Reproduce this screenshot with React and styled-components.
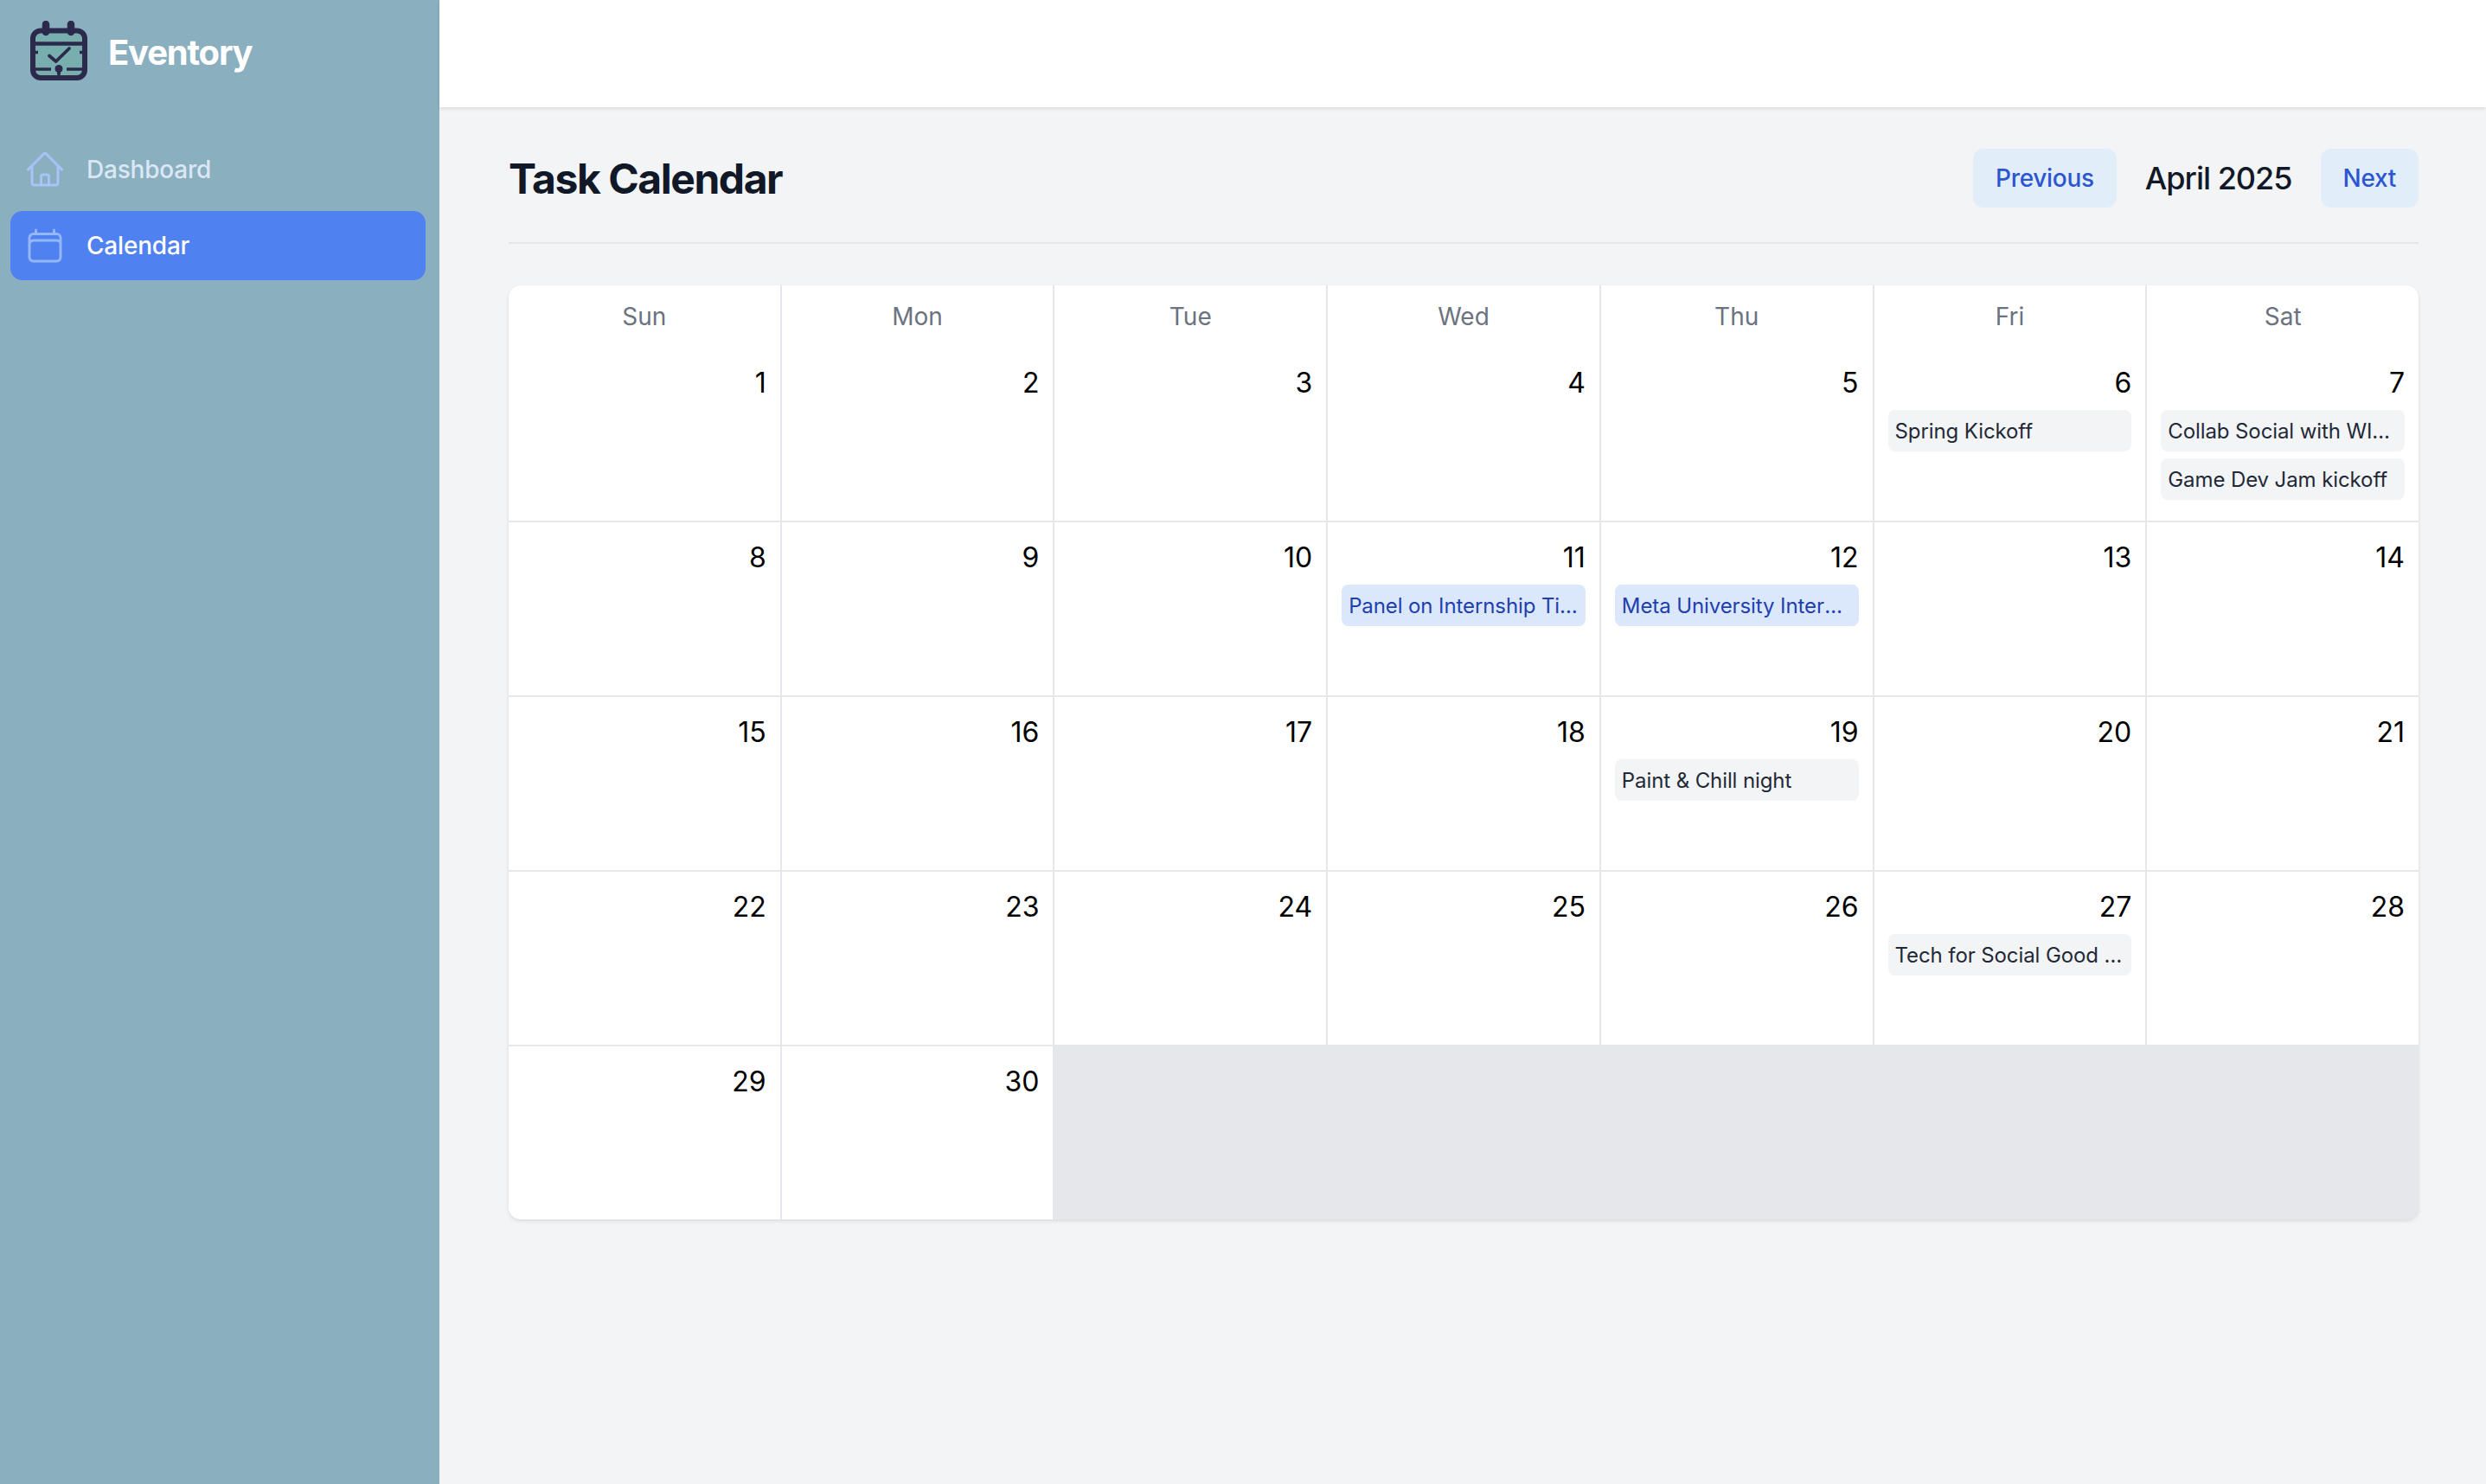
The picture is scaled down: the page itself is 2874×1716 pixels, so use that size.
import React from 'react';
import styled, { createGlobalStyle } from 'styled-components';
import { HiOutlineHome, HiOutlineCalendar } from 'react-icons/hi2';

const GlobalStyle = createGlobalStyle`
  * {
    box-sizing: border-box;
  }
  body {
    margin: 0;
    font-family: Inter, "Liberation Sans", sans-serif;
    background: #f3f4f6;
  }
`;

const Page = styled.div`
  display: flex;
  min-height: 100vh;
`;

const Sidebar = styled.aside`
  width: 508px;
  flex-shrink: 0;
  background: #8aafbf;
`;

const Brand = styled.div`
  height: 156px;
  display: flex;
  align-items: flex-start;
  gap: 24px;
  padding: 24px 0 0 35px;
`;

const BrandName = styled.span`
  font-size: 40px;
  line-height: 74px;
  font-weight: 700;
  letter-spacing: -1.2px;
  color: #fff;
`;

const Nav = styled.nav`
  display: flex;
  flex-direction: column;
  gap: 8px;
  padding: 0 16px 0 12px;
`;

const NavItem = styled.a`
  height: 80px;
  display: flex;
  align-items: center;
  gap: 24px;
  padding: 0 16px;
  border-radius: 14px;
  font-size: 28px;
  font-weight: 500;
  letter-spacing: -0.2px;
  color: ${(p) => (p.$active ? '#fff' : '#dbe7f5')};
  background: ${(p) => (p.$active ? '#4f81f1' : 'transparent')};

  svg {
    width: 48px;
    height: 48px;
    color: ${(p) => (p.$active ? '#93b7fa' : '#a7c4f6')};
  }
`;

const Main = styled.main`
  flex: 1;
  min-width: 0;
  display: flex;
  flex-direction: column;
`;

const TopBar = styled.header`
  height: 124px;
  background: #fff;
  box-shadow: 0 2px 4px rgba(0, 0, 0, 0.1);
`;

const Content = styled.div`
  padding: 48px 78px 0 80px;
`;

const Header = styled.div`
  display: flex;
  align-items: center;
  justify-content: space-between;
  padding-bottom: 40px;
  border-bottom: 2px solid #e5e7eb;
  margin-bottom: 48px;
`;

const Title = styled.h1`
  margin: 0;
  padding-top: 2px;
  font-size: 48px;
  line-height: 66px;
  font-weight: 700;
  letter-spacing: -1.45px;
  color: #111827;
`;

const MonthNav = styled.div`
  display: flex;
  align-items: center;
  gap: 33px;
`;

const MonthLabel = styled.span`
  font-size: 36px;
  font-weight: 500;
  letter-spacing: -1px;
  color: #111827;
`;

const NavButton = styled.button`
  height: 68px;
  padding: 0 26px;
  border: 0;
  border-radius: 12px;
  background: #e2edfa;
  color: #2b56d0;
  font-family: inherit;
  font-size: 28px;
  font-weight: 500;
  letter-spacing: -0.3px;
`;

const Grid = styled.div`
  display: grid;
  grid-template-columns: repeat(7, 1fr);
  gap: 2px;
  background: #e5e7eb;
  border-radius: 14px;
  overflow: hidden;
  box-shadow: 0 2px 4px rgba(0, 0, 0, 0.1);
`;

const WeekDay = styled.div`
  height: 72px;
  margin-bottom: -2px;
  background: #fff;
  text-align: center;
  font-size: 28px;
  line-height: 73px;
  font-weight: 400;
  color: #6b7280;
`;

const DayCell = styled.div`
  height: 200px;
  min-width: 0;
  padding: 16px;
  background: #fff;
`;

const DayNumber = styled.div`
  text-align: right;
  font-size: 32px;
  line-height: 46px;
  padding-top: 2px;
  color: #000;
  margin-bottom: 8px;
`;

const EventPill = styled.div`
  height: 48px;
  padding: 9px 8px 7px;
  margin-bottom: 8px;
  border-radius: 8px;
  font-size: 24px;
  line-height: 32px;
  letter-spacing: -0.1px;
  white-space: nowrap;
  overflow: hidden;
  text-overflow: ellipsis;
  background: ${(p) => (p.$highlight ? '#dbe7fb' : '#f3f4f6')};
  color: ${(p) => (p.$highlight ? '#1e40af' : '#1f2937')};
`;

const WEEK_DAYS = ['Sun', 'Mon', 'Tue', 'Wed', 'Thu', 'Fri', 'Sat'];

const EVENTS = {
  6: [{ title: 'Spring Kickoff' }],
  7: [{ title: 'Collab Social with WICS' }, { title: 'Game Dev Jam kickoff' }],
  11: [{ title: 'Panel on Internship Tips', highlight: true }],
  12: [{ title: 'Meta University Internship Info', highlight: true }],
  19: [{ title: 'Paint & Chill night' }],
  27: [{ title: 'Tech for Social Good Talk' }],
};

const days = Array.from({ length: 30 }, (_, i) => i + 1);

const Logo = () => (
  <svg width="66" height="69" viewBox="35 24 66 69" fill="none">
    <rect x="38" y="35.5" width="60" height="54.5" rx="9" fill="#78aead" stroke="#2b2a4c" strokeWidth="6" />
    <path d="M38 50.5H98" stroke="#2b2a4c" strokeWidth="4.5" />
    <path d="M53 28V37M82 28V37" stroke="#2b2a4c" strokeWidth="8.5" strokeLinecap="round" />
    <path d="M38 60.5H44M92 60.5H98" stroke="#2b2a4c" strokeWidth="3.5" />
    <path d="M40 80H59M77 80H96" stroke="#2b2a4c" strokeWidth="3.5" />
    <path d="M57 64.5L64.7 71L80 56" stroke="#2b2a4c" strokeWidth="3.8" strokeLinecap="round" strokeLinejoin="round" />
    <circle cx="68" cy="79.5" r="4.5" fill="#2b2a4c" />
    <path d="M68 81V85.5" stroke="#2b2a4c" strokeWidth="4" strokeLinecap="round" />
  </svg>
);

export default function App() {
  return (
    <Page>
      <GlobalStyle />
      <Sidebar>
        <Brand>
          <Logo />
          <BrandName>Eventory</BrandName>
        </Brand>
        <Nav>
          <NavItem>
            <HiOutlineHome />
            Dashboard
          </NavItem>
          <NavItem $active>
            <HiOutlineCalendar />
            Calendar
          </NavItem>
        </Nav>
      </Sidebar>
      <Main>
        <TopBar />
        <Content>
          <Header>
            <Title>Task Calendar</Title>
            <MonthNav>
              <NavButton>Previous</NavButton>
              <MonthLabel>April 2025</MonthLabel>
              <NavButton>Next</NavButton>
            </MonthNav>
          </Header>
          <Grid>
            {WEEK_DAYS.map((d) => (
              <WeekDay key={d}>{d}</WeekDay>
            ))}
            {days.map((day) => (
              <DayCell key={day}>
                <DayNumber>{day}</DayNumber>
                {(EVENTS[day] || []).map((ev) => (
                  <EventPill key={ev.title} $highlight={ev.highlight}>
                    {ev.title}
                  </EventPill>
                ))}
              </DayCell>
            ))}
          </Grid>
        </Content>
      </Main>
    </Page>
  );
}
